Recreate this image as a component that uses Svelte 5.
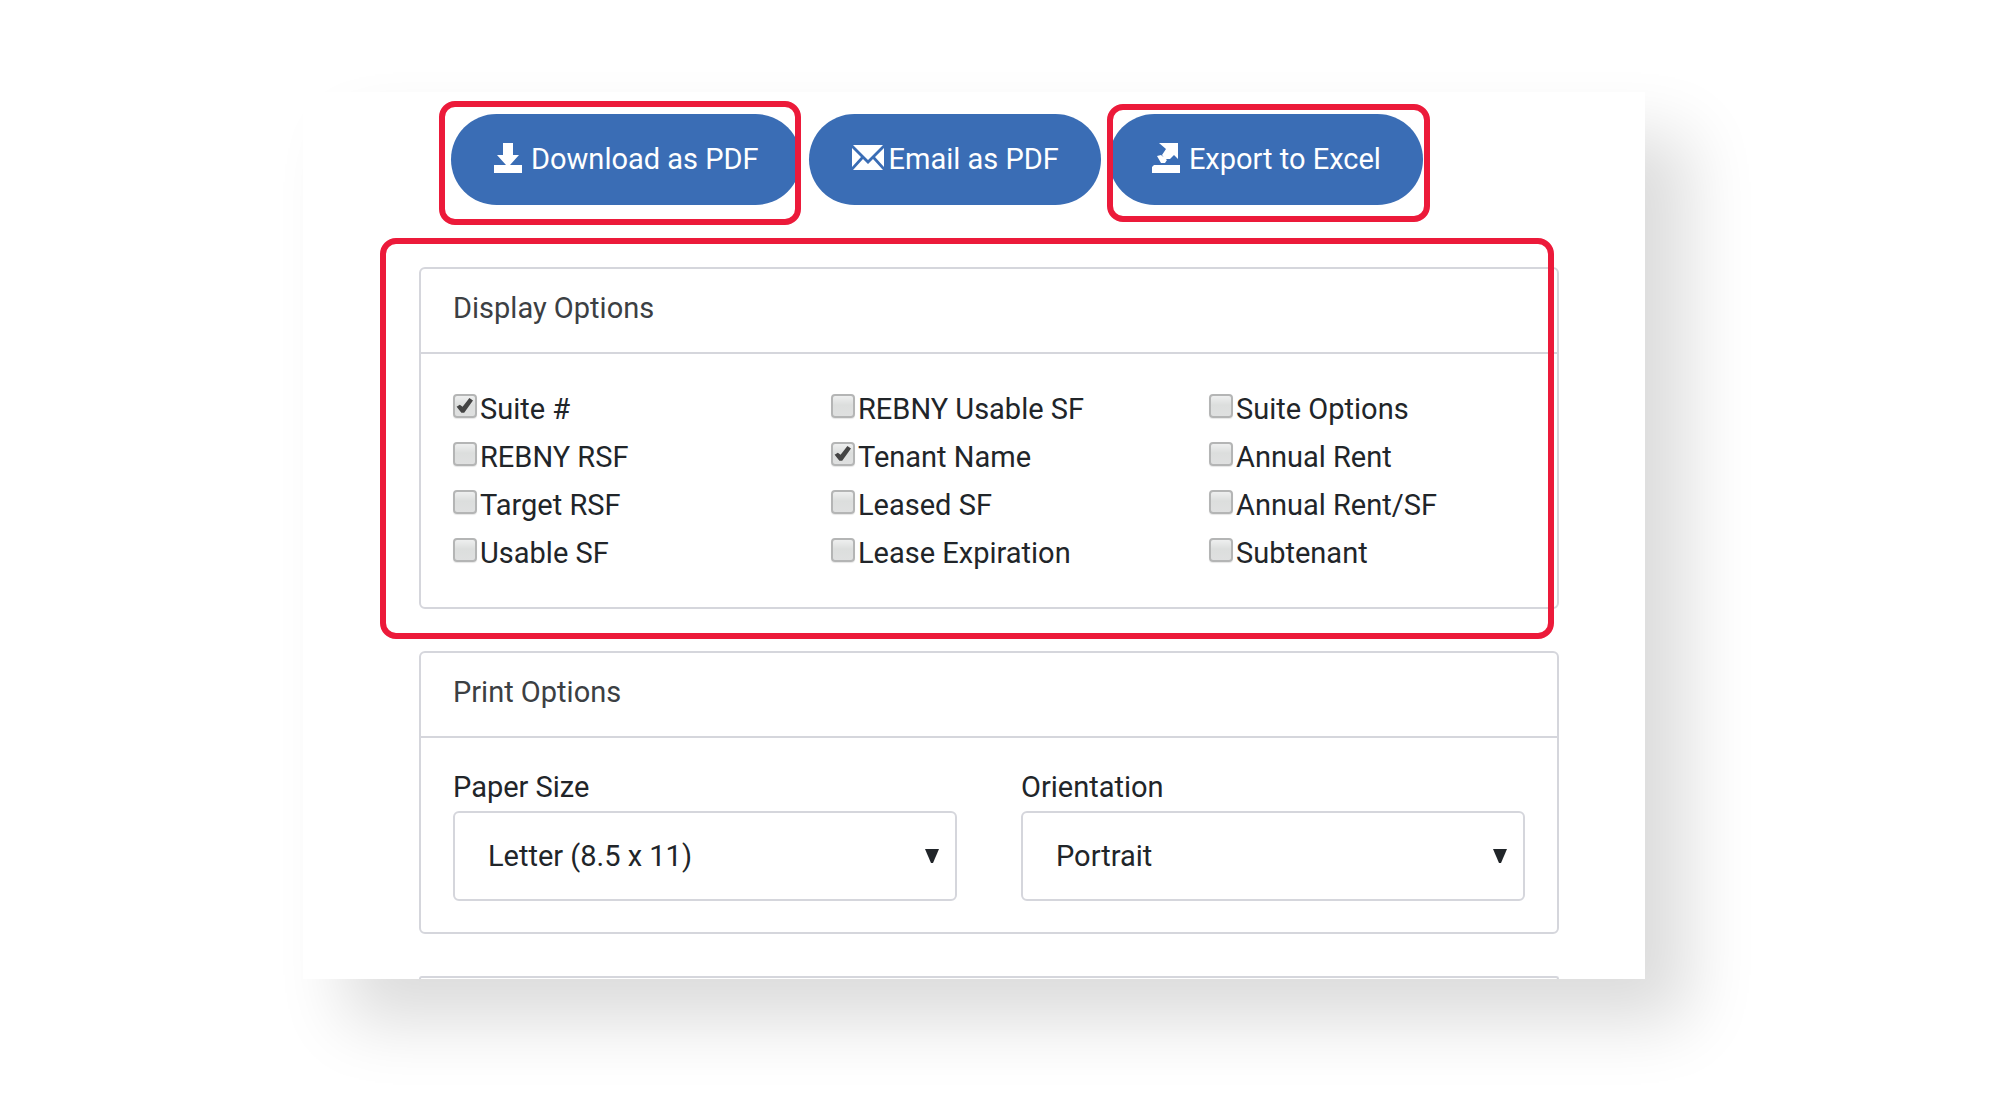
<script>
  let columns = $state([
    [
      { label: 'Suite #', checked: true },
      { label: 'REBNY RSF', checked: false },
      { label: 'Target RSF', checked: false },
      { label: 'Usable SF', checked: false }
    ],
    [
      { label: 'REBNY Usable SF', checked: false },
      { label: 'Tenant Name', checked: true },
      { label: 'Leased SF', checked: false },
      { label: 'Lease Expiration', checked: false }
    ],
    [
      { label: 'Suite Options', checked: false },
      { label: 'Annual Rent', checked: false },
      { label: 'Annual Rent/SF', checked: false },
      { label: 'Subtenant', checked: false }
    ]
  ]);
  let paper = $state('letter');
  let orientation = $state('portrait');
</script>

<main class="page">
  <div class="sheet">
    <div class="actions">
      <div class="action marked marked-download">
        <button type="button">
          <svg width="28" height="30" viewBox="0 0 28 30" aria-hidden="true">
            <path d="M9 0h10v12h6l-9 10h12v8H0v-8h12L3 12h6z" />
          </svg>
          <span>Download as PDF</span>
        </button>
      </div>
      <div class="action">
        <button type="button" class="tight">
          <svg width="32" height="30" viewBox="0 0 32 30" aria-hidden="true">
            <path d="M1 2h30L16 17zM0 5l9 9-9 10zM32 5v19l-9-10zM11 16l5 5 5-5 10 11H1z" />
          </svg>
          <span>Email as PDF</span>
        </button>
      </div>
      <div class="action marked marked-export">
        <button type="button">
          <svg width="28" height="30" viewBox="0 0 28 30" aria-hidden="true">
            <path d="M7 0h19v16l-4-4-4 4h-5l-3-4 4-6zM5 13l4-1 6 5-2 3H9zM2 22h26v8H0v-6z" />
          </svg>
          <span>Export to Excel</span>
        </button>
      </div>
    </div>

    <section class="panel marked marked-panel">
      <h2>Display Options</h2>
      <div class="checks">
        {#each columns as column}
          <div>
            {#each column as option}
              <label class="check">
                <input type="checkbox" bind:checked={option.checked} />
                <span>{option.label}</span>
              </label>
            {/each}
          </div>
        {/each}
      </div>
    </section>

    <section class="panel">
      <h2>Print Options</h2>
      <div class="fields">
        <div class="field">
          <label for="paper">Paper Size</label>
          <div class="select">
            <select id="paper" bind:value={paper}>
              <option value="letter">Letter (8.5 x 11)</option>
              <option value="legal">Legal (8.5 x 14)</option>
            </select>
            <svg width="14" height="14" viewBox="0 0 14 14" aria-hidden="true"><path d="M0 0h14L8 14H6z" /></svg>
          </div>
        </div>
        <div class="field">
          <label for="orientation">Orientation</label>
          <div class="select">
            <select id="orientation" bind:value={orientation}>
              <option value="portrait">Portrait</option>
              <option value="landscape">Landscape</option>
            </select>
            <svg width="14" height="14" viewBox="0 0 14 14" aria-hidden="true"><path d="M0 0h14L8 14H6z" /></svg>
          </div>
        </div>
      </div>
    </section>

    <div class="panel next"></div>
  </div>
</main>

<style>
  :global(body) {
    margin: 0;
    background: #fff;
  }
  .page {
    padding: 92px 355px 134px 303px;
    color: #212529;
    font-family: Roboto, 'Liberation Sans', sans-serif;
    font-size: 29px;
    line-height: 48px;
  }
  .sheet {
    padding: 22px 86px 0 116px;
    background: #fff;
    box-shadow: 43px 43px 64px rgba(0, 0, 0, 0.14);
  }
  .actions {
    display: flex;
    gap: 8px;
    padding: 0 32px;
  }
  .marked {
    position: relative;
  }
  .marked::after {
    content: '';
    position: absolute;
    border: 6px solid #ec1a3a;
    border-radius: 16px;
    pointer-events: none;
  }
  .marked-download::after {
    inset: -13px 0 -20px -12px;
  }
  .marked-export::after {
    inset: -10px -7px -17px -2px;
  }
  .marked-panel::after {
    inset: -31px 3px -32px -41px;
  }
  button {
    display: flex;
    align-items: center;
    gap: 9px;
    height: 91px;
    padding: 0 42px 2px 43px;
    border: 0;
    border-radius: 46px;
    background: #3a6db5;
    color: #fff;
    font: inherit;
    white-space: nowrap;
  }
  .tight {
    gap: 5px;
  }
  button svg {
    fill: #fff;
    margin-bottom: 2px;
  }
  .panel {
    border: 2px solid #d5d6dc;
    border-radius: 6px;
  }
  .panel + .panel {
    margin-top: 42px;
  }
  .actions + .panel {
    margin-top: 62px;
  }
  h2 {
    margin: 0;
    padding: 15px 32px 20px;
    border-bottom: 2px solid #d5d6dc;
    color: #3c4043;
    font: inherit;
  }
  .checks {
    display: grid;
    grid-template-columns: repeat(3, 1fr);
    gap: 62px;
    padding: 31px 32px 30px;
  }
  .check {
    display: flex;
    align-items: center;
    gap: 3px;
    white-space: nowrap;
  }
  .check input {
    appearance: none;
    flex: none;
    width: 24px;
    height: 24px;
    margin: 0 0 6px;
    border: 2px solid #b4b5b5;
    border-radius: 4px;
    background: linear-gradient(#eeefef, #dcdedd 45%, #dfe0e0);
    box-shadow: 0 1px 1px rgba(0, 0, 0, 0.1);
  }
  .check input:checked::before {
    content: '';
    display: block;
    height: 20px;
    background: #444;
    clip-path: polygon(8% 54%, 24% 44%, 38% 54%, 72% 10%, 90% 22%, 46% 84%, 32% 84%);
  }
  .fields {
    display: grid;
    grid-template-columns: repeat(2, 1fr);
    gap: 64px;
    padding: 25px 32px 31px;
  }
  .field label {
    display: block;
  }
  .select {
    display: grid;
    align-items: center;
  }
  select {
    appearance: none;
    grid-area: 1 / 1;
    width: 100%;
    height: 90px;
    padding: 0 33px;
    border: 2px solid #d5d6dc;
    border-radius: 6px;
    background: #fff;
    color: #212529;
    font: inherit;
  }
  .select svg {
    grid-area: 1 / 1;
    justify-self: end;
    margin-right: 18px;
    fill: #212529;
    pointer-events: none;
  }
  .next {
    height: 1px;
    border-bottom: 0;
    border-radius: 6px 6px 0 0;
  }
</style>
